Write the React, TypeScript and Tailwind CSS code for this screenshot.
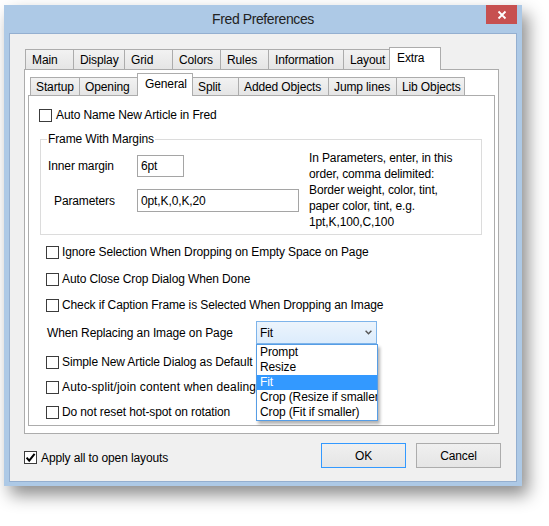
import React from "react";

type TabDef = { label: string; w: string; selected?: boolean };

const outerTabs: TabDef[] = [
  { label: "Main", w: "w-[49px]" },
  { label: "Display", w: "w-[52px]" },
  { label: "Grid", w: "w-[49px]" },
  { label: "Colors", w: "w-[49px]" },
  { label: "Rules", w: "w-[49px]" },
  { label: "Information", w: "w-[76px]" },
  { label: "Layout", w: "w-[47px]" },
  { label: "Extra", w: "w-[52px]", selected: true },
];

const innerTabs: TabDef[] = [
  { label: "Startup", w: "w-[50px]" },
  { label: "Opening", w: "w-[59px]" },
  { label: "General", w: "w-[56px]", selected: true },
  { label: "Split", w: "w-[47px]" },
  { label: "Added Objects", w: "w-[91px]" },
  { label: "Jump lines", w: "w-[69px]" },
  { label: "Lib Objects", w: "w-[69px]" },
];

function Tab({ t, first, innerRow }: { t: TabDef; first: boolean; innerRow: boolean }) {
  const base = `${t.w} ${first ? "" : "-ml-px"} flex shrink-0 items-center border-l border-r border-t border-[#acacac] whitespace-nowrap`;
  if (t.selected) {
    return (
      <div className={`${base} relative z-10 -mb-px h-[23px] bg-white pl-[7px] pb-[3px]`}>
        {t.label}
      </div>
    );
  }
  return (
    <div
      className={`${base} ${innerRow ? "h-[18px] pl-[5px]" : "h-[20px] pl-[6px]"} bg-gradient-to-b from-[#f2f2f2] to-[#e5e5e5]`}
    >
      {t.label}
    </div>
  );
}

function Box({ checked }: { checked?: boolean }) {
  return (
    <span className="flex h-[13px] w-[13px] shrink-0 items-center justify-center border border-[#3c3c3c] bg-white">
      {checked ? (
        <svg width="11" height="11" viewBox="0 0 11 11">
          <path d="M1.6 5.6 L4.2 8.6 L9.6 1.8" fill="none" stroke="#000" strokeWidth="2" />
        </svg>
      ) : null}
    </span>
  );
}

export default function App() {
  return (
    <div className="min-h-[526px] bg-white pl-[4px] pt-[5px] font-['Liberation_Sans',Arial,sans-serif] text-[12px] tracking-[-0.12px] text-black">
      <div className="flex h-[481px] w-[518px] flex-col bg-[#adc9e6] shadow-[6px_9px_16px_rgba(0,0,0,0.45)]">
        {/* Title bar */}
        <div className="relative flex h-[28px] shrink-0 items-center justify-center">
          <span className="mt-[1px] text-[14px] tracking-[-0.4px] text-[#222222]">Fred Preferences</span>
          <div className="absolute right-[5px] top-0 flex h-[19px] w-[31px] items-center justify-center bg-[#c75050]">
            <svg width="10" height="10" viewBox="0 0 10 10">
              <path d="M1.5 1.5L8.5 8.5M8.5 1.5L1.5 8.5" stroke="white" strokeWidth="1.8" />
            </svg>
          </div>
        </div>

        {/* Client */}
        <div className="mx-[5px] mb-[4px] flex flex-1 flex-col border border-[#94afd0] bg-[#f0f0f0] pl-[14px] pt-[13px]">
          {/* Outer tabs */}
          <div className="relative z-10 flex h-[22px] items-end pl-[1px]">
            {outerTabs.map((t, i) => (
              <Tab key={t.label} t={t} first={i === 0} innerRow={false} />
            ))}
          </div>
          <div className="h-[365px] w-[475px] border border-[#acacac] bg-white pl-[3px] pt-[3px]">
            {/* Inner tabs */}
            <div className="relative z-10 flex h-[22px] items-end pl-[2px]">
              {innerTabs.map((t, i) => (
                <Tab key={t.label} t={t} first={i === 0} innerRow={true} />
              ))}
            </div>
            <div className="flex h-[331px] w-[467px] flex-col border border-[#acacac] bg-white">
              <div className="ml-[10px] mt-[9px] flex h-[20px] items-center gap-[4px]">
                <Box />
                <span>Auto Name New Article in Fred</span>
              </div>

              <fieldset className="ml-[11px] mt-[6px] w-[442px] border border-[#dcdcdc]">
                <legend className="ml-[6px] px-[1px] leading-[16px]">Frame With Margins</legend>
                <div className="flex h-[87px]">
                  <div className="flex w-[268px] flex-col">
                    <div className="mt-[8px] flex h-[22px] items-center">
                      <span className="w-[96px] pl-[7px]">Inner margin</span>
                      <div className="flex h-[22px] w-[47px] items-center border border-[#a5a5a5] bg-white pl-[3px]">6pt</div>
                    </div>
                    <div className="mt-[12px] flex h-[23px] items-center">
                      <span className="w-[96px] pl-[13px]">Parameters</span>
                      <div className="flex h-[23px] w-[162px] items-center border border-[#a5a5a5] bg-white pl-[3px]">0pt,K,0,K,20</div>
                    </div>
                  </div>
                  <div className="pt-[3px] leading-[16px]">
                    In Parameters, enter, in this
                    <br />
                    order, comma delimited:
                    <br />
                    Border weight, color, tint,
                    <br />
                    paper color, tint, e.g.
                    <br />
                    1pt,K,100,C,100
                  </div>
                </div>
              </fieldset>

              <div className="ml-[17px] mt-[7px] flex h-[20px] items-center gap-[3px]">
                <Box />
                <span>Ignore Selection When Dropping on Empty Space on Page</span>
              </div>
              <div className="ml-[17px] mt-[7px] flex h-[20px] items-center gap-[3px]">
                <Box />
                <span>Auto Close Crop Dialog When Done</span>
              </div>
              <div className="ml-[17px] mt-[6px] flex h-[20px] items-center gap-[3px]">
                <Box />
                <span>Check if Caption Frame is Selected When Dropping an Image</span>
              </div>

              <div className="relative z-20 ml-[18px] mt-[6px] flex h-[23px] items-center">
                <span className="w-[209px]">When Replacing an Image on Page</span>
                <div className="relative h-[23px] w-[121px]">
                  <div className="flex h-[23px] w-[121px] items-center justify-between border border-[#7eb4ea] bg-gradient-to-b from-[#ecf4fc] to-[#dcecfc] pl-[3px] pr-[4px]">
                    <span>Fit</span>
                    <svg width="7" height="5" viewBox="0 0 7 5">
                      <path d="M0.6 0.8 L3.5 3.8 L6.4 0.8" fill="none" stroke="#555" strokeWidth="1.4" />
                    </svg>
                  </div>
                  <div className="absolute left-0 top-[23px] w-[122px] overflow-hidden border border-[#569de5] bg-white shadow-[2px_3px_3px_rgba(0,0,0,0.3)]">
                    <div className="h-[15px] whitespace-nowrap pl-[3px] leading-[15px]">Prompt</div>
                    <div className="h-[15px] whitespace-nowrap pl-[3px] leading-[15px]">Resize</div>
                    <div className="h-[15px] whitespace-nowrap bg-[#3399ff] pl-[3px] leading-[15px] text-white">Fit</div>
                    <div className="h-[15px] whitespace-nowrap pl-[3px] leading-[15px]">Crop (Resize if smaller)</div>
                    <div className="h-[15px] whitespace-nowrap pl-[3px] leading-[15px]">Crop (Fit if smaller)</div>
                  </div>
                </div>
              </div>

              <div className="ml-[17px] mt-[8px] flex h-[20px] items-center gap-[3px]">
                <Box />
                <span>Simple New Article Dialog as Default</span>
              </div>
              <div className="ml-[17px] mt-[5px] flex h-[20px] items-center gap-[3px]">
                <Box />
                <span className="whitespace-nowrap tracking-[0.15px]">Auto-split/join content when dealing with text</span>
              </div>
              <div className="ml-[17px] mt-[5px] flex h-[20px] items-center gap-[3px]">
                <Box />
                <span>Do not reset hot-spot on rotation</span>
              </div>
            </div>
          </div>

          {/* Bottom row */}
          <div className="mt-[9px] flex h-[25px] w-[477px] items-center justify-between">
            <div className="mt-[4px] flex items-center gap-[4px]">
              <Box checked />
              <span>Apply all to open layouts</span>
            </div>
            <div className="flex gap-[10px]">
              <div className="flex h-[25px] w-[85px] items-center justify-center border border-[#3399ff] bg-gradient-to-b from-[#f0f0f0] to-[#e5e5e5]">OK</div>
              <div className="flex h-[25px] w-[85px] items-center justify-center border border-[#acacac] bg-gradient-to-b from-[#f0f0f0] to-[#e5e5e5]">Cancel</div>
            </div>
          </div>
        </div>
      </div>
    </div>
  );
}
